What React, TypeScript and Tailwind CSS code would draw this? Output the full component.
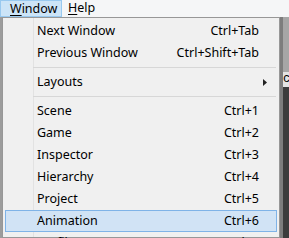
import React from "react";

type Item =
  | { kind: "item"; label: string; shortcut?: string; submenu?: boolean; active?: boolean }
  | { kind: "sep" };

const items: Item[] = [
  { kind: "item", label: "Next Window", shortcut: "Ctrl+Tab" },
  { kind: "item", label: "Previous Window", shortcut: "Ctrl+Shift+Tab" },
  { kind: "sep" },
  { kind: "item", label: "Layouts", submenu: true },
  { kind: "sep" },
  { kind: "item", label: "Scene", shortcut: "Ctrl+1" },
  { kind: "item", label: "Game", shortcut: "Ctrl+2" },
  { kind: "item", label: "Inspector", shortcut: "Ctrl+3" },
  { kind: "item", label: "Hierarchy", shortcut: "Ctrl+4" },
  { kind: "item", label: "Project", shortcut: "Ctrl+5" },
  { kind: "item", label: "Animation", shortcut: "Ctrl+6", active: true },
  { kind: "item", label: "Profiler", shortcut: "Ctrl+7" },
];

function MenuRow({ item }: { item: Item }) {
  if (item.kind === "sep") {
    return (
      <div className="h-[7px] flex items-center pl-[28px] pr-px">
        <div className="h-px w-full bg-[#d7d7d7]" />
      </div>
    );
  }
  return (
    <div
      className={
        "h-[22px] shrink-0 flex items-center border pl-[31px] " +
        (item.active ? "bg-[#d1e3f5] border-[#7fb3e7]" : "border-transparent")
      }
    >
      <span className="flex-1">{item.label}</span>
      {item.shortcut && <span>{item.shortcut}</span>}
      <span className="w-[17px] flex justify-end pr-[9px]">
        {item.submenu && (
          <svg width="4" height="7" viewBox="0 0 4 7">
            <path d="M0 0 L4 3.5 L0 7 Z" fill="#222" />
          </svg>
        )}
      </span>
    </div>
  );
}

export default function App() {
  return (
    <div
      className="w-[289px] h-[238px] overflow-hidden flex flex-col bg-[#a0a0a0] text-[12.5px] text-black"
      style={{ fontFamily: '"Noto Sans", "Open Sans", sans-serif' }}
    >
      {/* menu bar */}
      <div className="h-[17px] shrink-0 flex items-stretch bg-[#f5f6f7] leading-[15px]">
        <div className="w-[62px] shrink-0 border border-[#99c9ef] bg-[#cce4f7] pl-[9px]">
          <u className="underline-offset-2">W</u>indow
        </div>
        <div className="pl-[6px]">
          <u className="underline-offset-2">H</u>elp
        </div>
      </div>

      <div className="flex flex-1 min-h-0">
        {/* editor behind, left edge */}
        <div className="w-[2px] shrink-0 bg-[#9c9c9c]" />

        {/* popup */}
        <div className="w-[278px] shrink-0 relative border border-[#979797] bg-[#f0f0f0] p-[2px] leading-none">
          <div className="absolute left-[30px] top-0 bottom-0 w-px bg-[#e2e2e2]" />
          <div className="relative">
            {items.map((it, i) => (
              <MenuRow key={i} item={it} />
            ))}
          </div>
        </div>

        {/* editor behind, right edge */}
        <div className="flex-1 flex">
          <div className="w-[3px] bg-[#7d7d7d]" />
          <div className="flex-1 flex flex-col">
            <div className="h-[55px] bg-[#a6a6a6]" />
            <div
              className="h-[15px] bg-[#e4e4e4] text-[12px] leading-[15px] overflow-hidden whitespace-nowrap"
              style={{ fontFamily: '"Liberation Mono", monospace' }}
            >
              ct
            </div>
            <div className="flex-1 bg-[#3c3c3c]" />
          </div>
        </div>
      </div>
    </div>
  );
}
